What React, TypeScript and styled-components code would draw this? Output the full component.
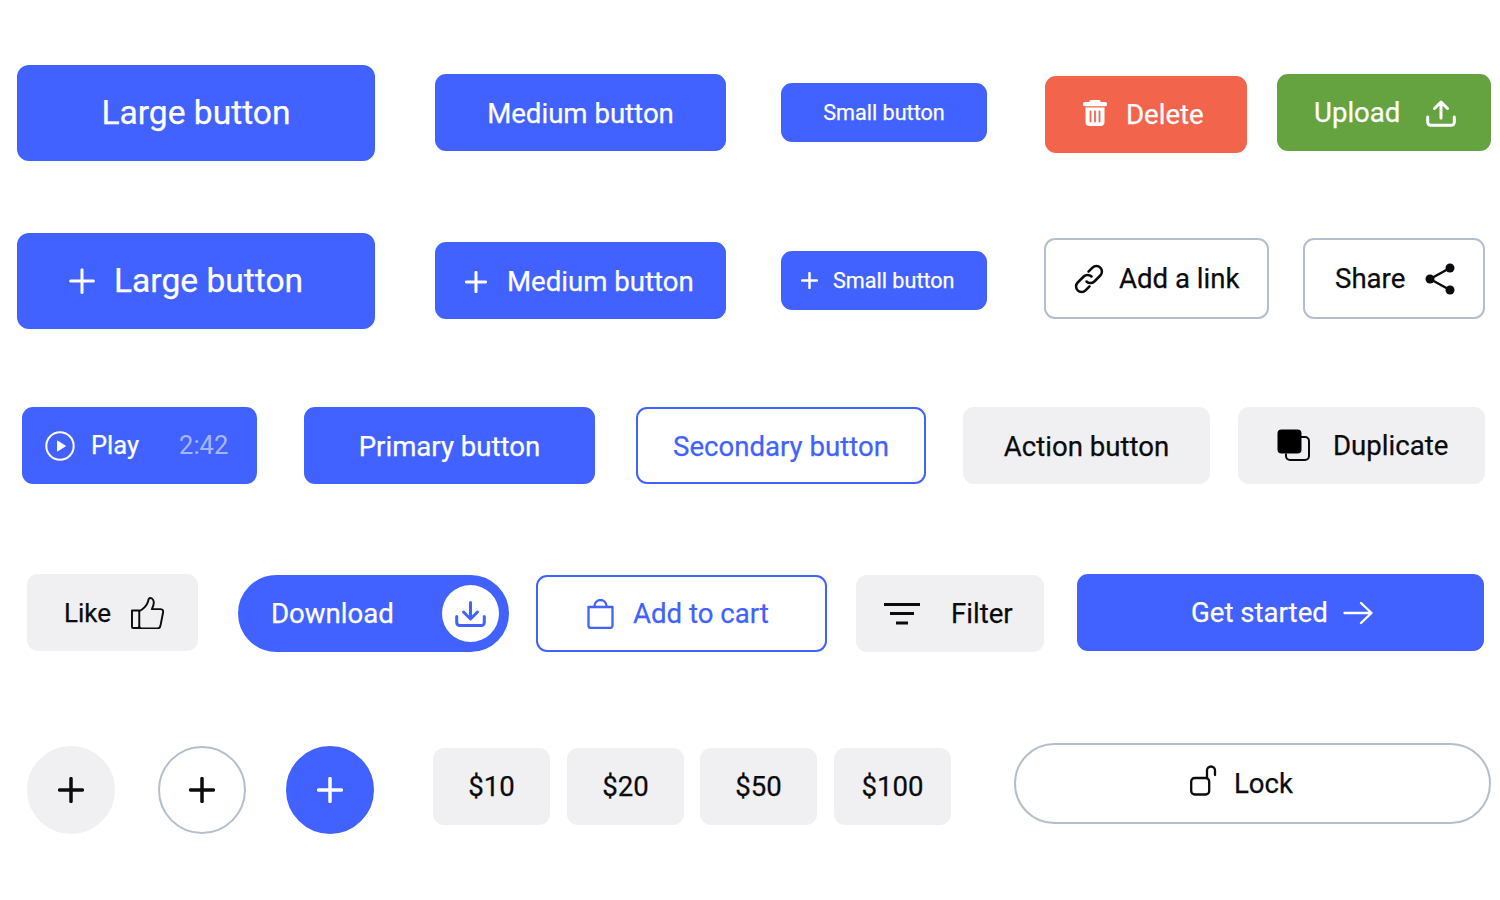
import React from "react";
import styled, { createGlobalStyle } from "styled-components";

const Global = createGlobalStyle`
  html, body { margin: 0; padding: 0; background: #fff; }
  body { font-family: Roboto, "Liberation Sans", sans-serif; }
`;

const BLUE = "#4262ff";
const GREY = "#f0f0f2";
const LINE = "#b5bfcc";
const RED = "#f2644c";

const Page = styled.div`
  width: 1500px;
  height: 900px;
  box-sizing: border-box;
  padding-top: 65px;
  display: flex;
  flex-direction: column;
  overflow: hidden;
`;

const Row = styled.div<{ $h: number }>`
  display: flex;
  align-items: flex-start;
  height: ${(p) => p.$h}px;
`;

type V = "blue" | "red" | "green" | "grey" | "ghost" | "outline";
const bg: Record<V, string> = { blue: BLUE, red: RED, green: "#65a340", grey: GREY, ghost: "#fff", outline: "#fff" };
const fg: Record<V, string> = { blue: "#fff", red: "#fff", green: "#fff", grey: "#0b0b0d", ghost: "#0b0b0d", outline: BLUE };
const bd: Record<V, string> = { blue: BLUE, red: RED, green: "#65a340", grey: GREY, ghost: LINE, outline: BLUE };

const Btn = styled.button<{ $v: V; $w: number; $h: number; $ml: number; $mt?: number; $fs?: number; $r?: number; $gap?: number; $pl?: number; $pt?: number }>`
  flex: none;
  box-sizing: border-box;
  width: ${(p) => p.$w}px;
  height: ${(p) => p.$h}px;
  margin-left: ${(p) => p.$ml}px;
  margin-top: ${(p) => p.$mt ?? 0}px;
  display: flex;
  align-items: center;
  justify-content: ${(p) => (p.$pl !== undefined ? "flex-start" : "center")};
  gap: ${(p) => p.$gap ?? 0}px;
  padding: ${(p) => p.$pt ?? 0}px 0 0 ${(p) => p.$pl ?? 0}px;
  font-family: Roboto, "Liberation Sans", sans-serif;
  font-size: ${(p) => p.$fs ?? 27.6}px;
  font-weight: 400;
  -webkit-text-stroke: 0.25px currentColor;
  line-height: 1;
  letter-spacing: 0;
  color: ${(p) => fg[p.$v]};
  background: ${(p) => bg[p.$v]};
  border: 2px solid ${(p) => bd[p.$v]};
  border-radius: ${(p) => p.$r ?? 11}px;
`;

const Ico = styled.svg`
  flex: none;
  display: block;
`;

const Muted = styled.span`
  margin-left: 24px;
  color: rgba(255, 255, 255, 0.55);
  -webkit-text-stroke: 0;
`;

const WhiteDisc = styled.span`
  flex: none;
  width: 57px;
  height: 57px;
  margin-left: 48px;
  border-radius: 50%;
  background: #fff;
  display: flex;
  align-items: center;
  justify-content: center;
`;

const Plus = ({ s, w = 3 }: { s: number; w?: number }) => (
  <Ico width={s} height={s} viewBox="0 0 24 24" fill="none" stroke="currentColor" strokeWidth={(w * 24) / s} strokeLinecap="round">
    <path d="M12 1.500v21M1.500 12h21" />
  </Ico>
);

const Trash = () => (
  <Ico width="24" height="29" viewBox="0 0 24 29" fill="currentColor">
    <path fillRule="evenodd" d="M8 0h8a1.500 1.500 0 0 1 1.500 1.200l.1.800h4.400a2 2 0 0 1 0 4.200H2a2 2 0 0 1 0-4.200h4.400l.1-.8A1.500 1.500 0 0 1 8 0zM2.500 7.500h19v14.500a4 4 0 0 1-4 4h-11a4 4 0 0 1-4-4zm5 3a.9.9 0 0 0-.9.900v10.200a.9.9 0 0 0 1.800 0V11.400a.9.9 0 0 0-.9-.9zm4.500 0a.9.9 0 0 0-.9.900v10.200a.9.9 0 0 0 1.800 0V11.400a.9.9 0 0 0-.9-.9zm4.500 0a.9.9 0 0 0-.9.900v10.200a.9.9 0 0 0 1.800 0V11.400a.9.9 0 0 0-.9-.9z" />
  </Ico>
);

const Upload = () => (
  <Ico width="30" height="28" viewBox="0 0 30 28" fill="none" stroke="currentColor" strokeWidth="3" strokeLinecap="round" strokeLinejoin="round">
    <path d="M15 19V3M8.500 9.500 15 3l6.500 6.500M1.700 18v5.300a3 3 0 0 0 3 3h20.600a3 3 0 0 0 3-3V18" />
  </Ico>
);

const LinkIco = () => (
  <Ico width="30" height="30" viewBox="0 0 30 30" fill="none" stroke="currentColor" strokeWidth="2.500" strokeLinecap="round" strokeLinejoin="round">
    <path d="M12.500 17.500a5.500 5.500 0 0 0 7.800 0l6-6a5.500 5.500 0 0 0-7.800-7.800l-4 4" />
    <path d="M17.500 12.500a5.500 5.500 0 0 0-7.800 0l-6 6a5.500 5.500 0 0 0 7.800 7.800l4-4" />
  </Ico>
);

const ShareIco = () => (
  <Ico width="32" height="32" viewBox="0 0 32 32" fill="currentColor" stroke="currentColor" strokeWidth="2.500">
    <path d="M6 16 26 5M6 16l20 11" fill="none" />
    <circle cx="6" cy="16" r="4.500" stroke="none" />
    <circle cx="26" cy="5" r="4.500" stroke="none" />
    <circle cx="26" cy="27" r="4.500" stroke="none" />
  </Ico>
);

const PlayIco = () => (
  <Ico width="30" height="30" viewBox="0 0 30 30" fill="none">
    <circle cx="15" cy="15" r="13.700" stroke="currentColor" strokeWidth="2" />
    <path d="M12 10.200v9.600a.6.6 0 0 0 .9.500l7.500-4.800a.6.6 0 0 0 0-1l-7.500-4.800a.6.6 0 0 0-.9.500z" fill="currentColor" />
  </Ico>
);

const DupIco = () => (
  <Ico width="33" height="33" viewBox="0 0 33 33" fill="none">
    <path d="M24 8h4a4 4 0 0 1 4 4v15a4 4 0 0 1-4 4H13a4 4 0 0 1-4-4v-2.500" stroke="currentColor" strokeWidth="2" />
    <rect x="0.500" y="0.500" width="24" height="24" rx="4" fill="#000" />
  </Ico>
);

const ThumbIco = () => (
  <Ico width="33" height="32" viewBox="0 0 34 33" fill="none" stroke="currentColor" strokeWidth="2" strokeLinejoin="round" strokeLinecap="round">
    <path d="M1 14h7.500v18H2a1 1 0 0 1-1-1z" />
    <path d="M8.500 14.500c4-1.500 8-6 9-9.500.4-1.400.3-4 2.200-4 2.300 0 3.800 2.500 3.800 5 0 2.300-1 4.500-2 6.500h9c2.300 0 3 2 2.500 3.800l-2.500 12.700c-.3 2-1.600 3.500-3.500 3.500H11c-1.500 0-2.500-1-2.500-2" />
  </Ico>
);

const DownloadIco = () => (
  <Ico width="31" height="26" viewBox="0 0 31 26" fill="none" stroke={BLUE} strokeWidth="3" strokeLinecap="round" strokeLinejoin="round">
    <path d="M15.500 1.500v16M8.500 11l7 7 7-7M1.700 15.500v6a3 3 0 0 0 3 3h21.600a3 3 0 0 0 3-3v-6" />
  </Ico>
);

const BagIco = () => (
  <Ico width="27" height="30" viewBox="0 0 27 30" fill="none" stroke="currentColor" strokeWidth="2.300" strokeLinejoin="round">
    <path d="M1.500 8h24v18.500a2.400 2.400 0 0 1-2.400 2.400H3.900a2.400 2.400 0 0 1-2.400-2.400z" />
    <path d="M7.500 8V7a6 6 0 0 1 12 0v1" />
  </Ico>
);

const FilterIco = () => (
  <Ico width="36" height="22" viewBox="0 0 36 22" fill="none" stroke="currentColor" strokeWidth="3">
    <path d="M0 1.500h36M6 10.500h24M12 20h12" />
  </Ico>
);

const ArrowIco = () => (
  <Ico width="30" height="24" viewBox="0 0 30 24" fill="none" stroke="currentColor" strokeWidth="2.300" strokeLinecap="round" strokeLinejoin="round">
    <path d="M1.500 12h27M18 2l10.500 10L18 22" />
  </Ico>
);

const LockIco = () => (
  <Ico width="27" height="37" viewBox="0 0 27 37" fill="none" stroke="currentColor" strokeWidth="2.300" strokeLinecap="round">
    <rect x="1.200" y="13" width="18" height="16.500" rx="3.500" />
    <path d="M17 13V5.500a4 4 0 0 1 8 0V10" />
  </Ico>
);

export default function App() {
  return (
    <Page>
      <Global />
      <Row $h={168}>
        <Btn $v="blue" $w={358} $h={96} $ml={17} $fs={33.6} $r={12}>Large button</Btn>
        <Btn $v="blue" $w={291} $h={77} $ml={60} $mt={9} $pt={2}>Medium button</Btn>
        <Btn $v="blue" $w={206} $h={59} $ml={55} $mt={18} $fs={21.6}>Small button</Btn>
        <Btn $v="red" $w={202} $h={77} $ml={58} $mt={11} $pl={36} $gap={19}><Trash />Delete</Btn>
        <Btn $v="green" $w={214} $h={77} $ml={30} $mt={9} $pl={35} $gap={26}>Upload<Upload /></Btn>
      </Row>
      <Row $h={174}>
        <Btn $v="blue" $w={358} $h={96} $ml={17} $fs={33.6} $r={12} $pl={50} $gap={19}><Plus s={26} />Large button</Btn>
        <Btn $v="blue" $w={291} $h={77} $ml={60} $mt={9} $pt={2} $pl={28} $gap={20}><Plus s={22} />Medium button</Btn>
        <Btn $v="blue" $w={206} $h={59} $ml={55} $mt={18} $fs={21.6} $pl={18} $gap={15}><Plus s={17} w={2.500} />Small button</Btn>
        <Btn $v="ghost" $w={225} $h={81} $ml={57} $mt={5} $pl={28} $gap={15}><LinkIco />Add a link</Btn>
        <Btn $v="ghost" $w={182} $h={81} $ml={34} $mt={5} $pl={30} $gap={19}>Share<ShareIco /></Btn>
      </Row>
      <Row $h={167}>
        <Btn $v="blue" $w={235} $h={77} $ml={22} $pl={21} $gap={16} $fs={25.5}><PlayIco />Play<Muted>2:42</Muted></Btn>
        <Btn $v="blue" $w={291} $h={77} $ml={47} $pt={2}>Primary button</Btn>
        <Btn $v="outline" $w={290} $h={77} $ml={41} $pt={2}>Secondary button</Btn>
        <Btn $v="grey" $w={247} $h={77} $ml={37} $pt={2}>Action button</Btn>
        <Btn $v="grey" $w={247} $h={77} $ml={28} $pl={37} $gap={23}><DupIco />Duplicate</Btn>
      </Row>
      <Row $h={169}>
        <Btn $v="grey" $w={171} $h={77} $ml={27} $fs={26} $pl={35} $gap={20}>Like<ThumbIco /></Btn>
        <Btn $v="blue" $w={271} $h={77} $ml={40} $mt={1} $r={39} $pl={31}>Download<WhiteDisc><DownloadIco /></WhiteDisc></Btn>
        <Btn $v="outline" $w={291} $h={77} $ml={27} $mt={1} $pl={49} $gap={19}><BagIco />Add to cart</Btn>
        <Btn $v="grey" $w={188} $h={77} $ml={29} $mt={1} $pl={26} $gap={31}><FilterIco />Filter</Btn>
        <Btn $v="blue" $w={407} $h={77} $ml={33} $pl={112} $gap={15}>Get started<ArrowIco /></Btn>
      </Row>
      <Row $h={90}>
        <Btn $v="grey" $w={88} $h={88} $ml={27} $mt={3} $r={44}><Plus s={26} w={3.500} /></Btn>
        <Btn $v="ghost" $w={88} $h={88} $ml={43} $mt={3} $r={44}><Plus s={26} w={3.500} /></Btn>
        <Btn $v="blue" $w={88} $h={88} $ml={40} $mt={3} $r={44}><Plus s={26} w={3.500} /></Btn>
        <Btn $v="grey" $w={117} $h={77} $ml={59} $mt={5}>$10</Btn>
        <Btn $v="grey" $w={117} $h={77} $ml={17} $mt={5}>$20</Btn>
        <Btn $v="grey" $w={117} $h={77} $ml={16} $mt={5}>$50</Btn>
        <Btn $v="grey" $w={117} $h={77} $ml={17} $mt={5}>$100</Btn>
        <Btn $v="ghost" $w={477} $h={81} $ml={63} $r={41} $pl={174} $gap={17}><LockIco />Lock</Btn>
      </Row>
    </Page>
  );
}
